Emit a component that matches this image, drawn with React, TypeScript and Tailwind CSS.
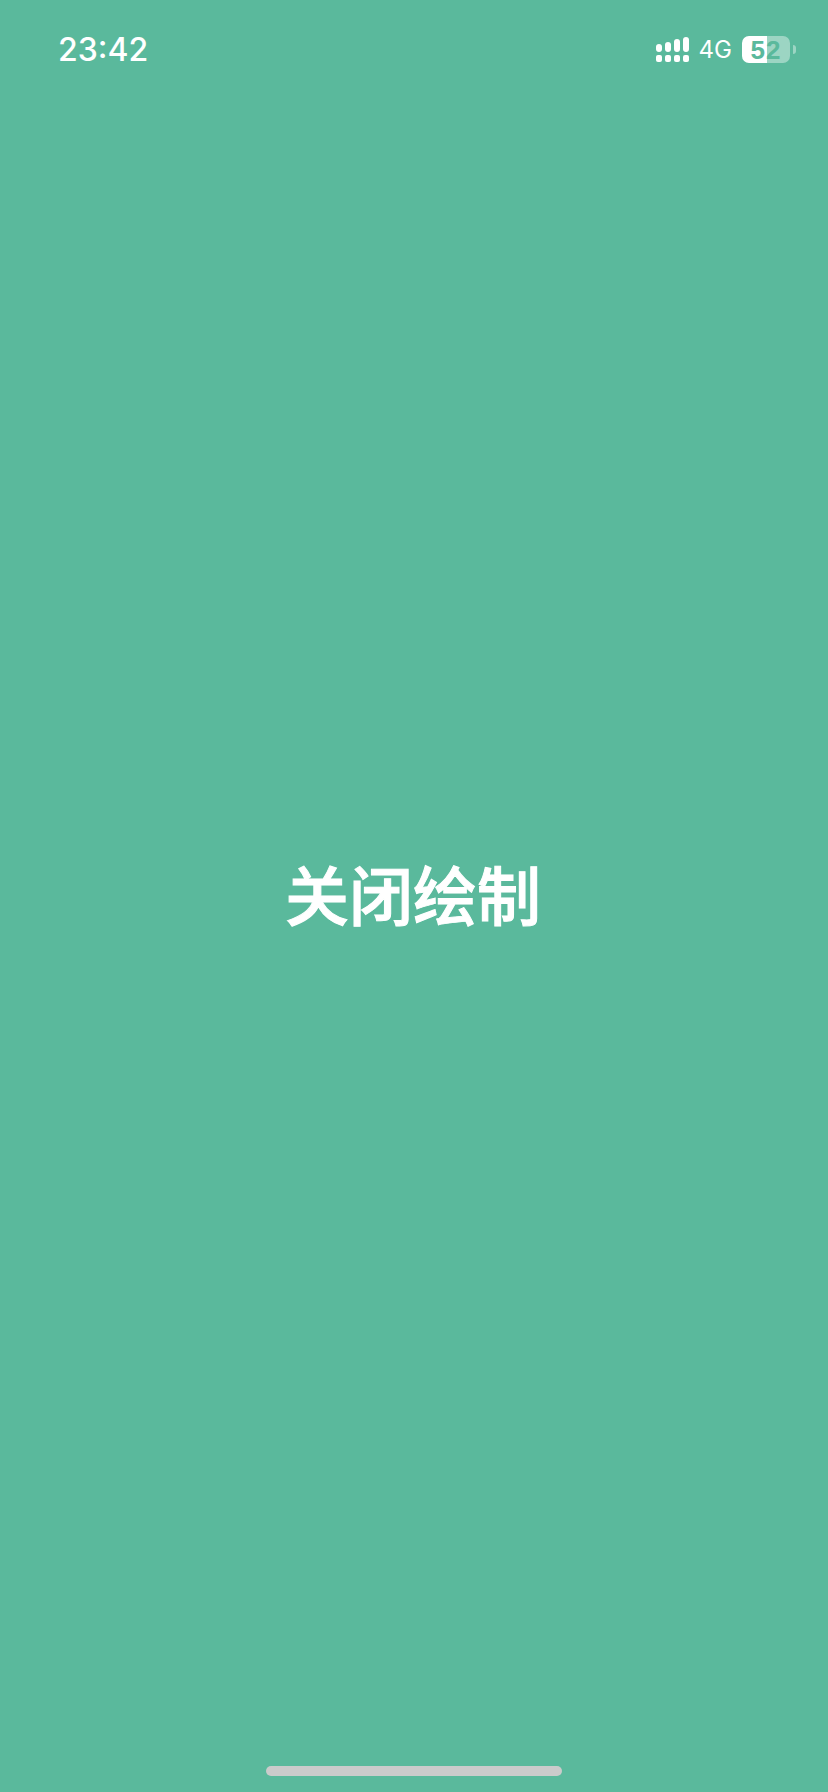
import React from 'react';

const bars = ['h-[8px]', 'h-[10px]', 'h-[13px]', 'h-[15px]'];

const SignalIcon: React.FC = () => (
  <div className="flex items-end gap-[3px]">
    {bars.map((height, index) => (
      <div key={`bar-${index}`} className="flex flex-col gap-[3px]">
        <div className={`w-[6px] rounded-[3px] bg-white ${height}`} />
        <div className="h-[7px] w-[6px] rounded-[2px] bg-white" />
      </div>
    ))}
  </div>
);

const Battery: React.FC = () => (
  <div className="flex items-center">
    <div className="relative flex h-[27px] w-[48px] overflow-hidden rounded-[7px]">
      <div className="w-[25px] bg-white" />
      <div className="flex-1 bg-white/40" />
      <span className="absolute inset-0 flex items-center justify-center text-[26px] font-bold leading-none tracking-[1px] text-[#5ab99c]">
        52
      </span>
    </div>
    <div className="ml-[3px] h-[9px] w-[3px] rounded-r-[3px] bg-white/40" />
  </div>
);

export default function App() {
  return (
    <div className="flex h-[1792px] w-[828px] flex-col bg-[#5ab99c] font-['Liberation_Sans','Noto_Sans_CJK_SC',sans-serif] text-white">
      <div className="flex h-[88px] items-center justify-between pl-[58px] pr-[32px] pt-[11px]">
        <span className="font-['Inter',sans-serif] text-[32px] font-medium leading-none">23:42</span>
        <div className="flex items-center">
          <SignalIcon />
          <span className="ml-[10px] font-['Inter',sans-serif] text-[24px] leading-none">4G</span>
          <div className="ml-[10px]">
            <Battery />
          </div>
        </div>
      </div>
      <div className="flex flex-1 items-center justify-center pb-[8px] pr-[2px]">
        <h1 className="font-['Noto_Sans_CJK_SC',sans-serif] text-[64px] font-medium leading-none [-webkit-text-stroke:1px_white]">
          关闭绘制
        </h1>
      </div>
      <div className="flex h-[88px] items-end justify-center pb-[16px]">
        <div className="h-[10px] w-[296px] rounded-full bg-[#cbcbcb]" />
      </div>
    </div>
  );
}
